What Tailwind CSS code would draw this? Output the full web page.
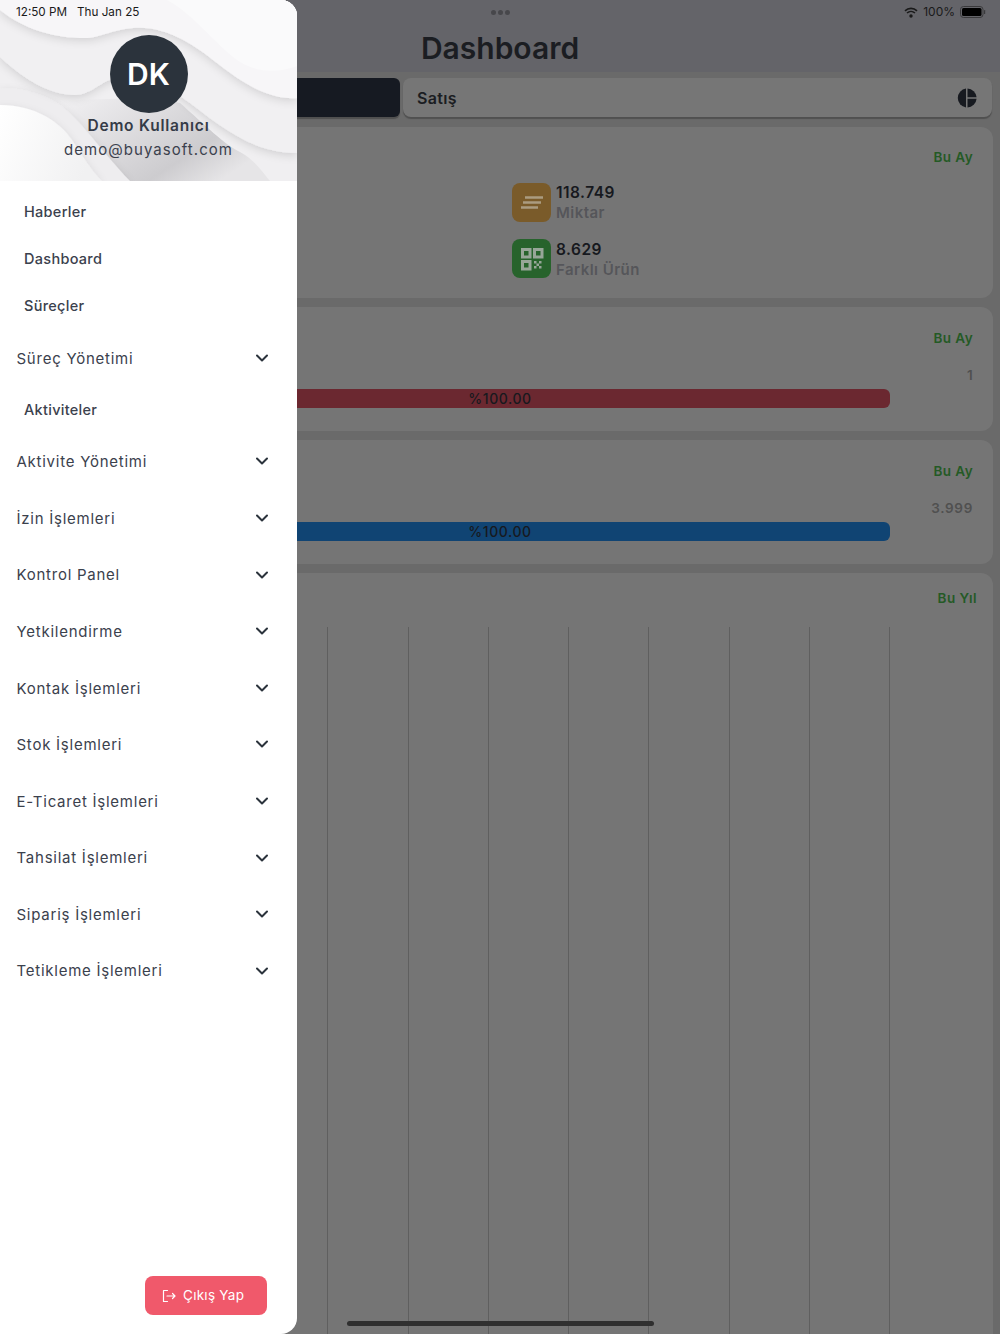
<!DOCTYPE html>
<html lang="en">
<head>
    <meta charset="UTF-8">
    <meta name="viewport" content="width=device-width, initial-scale=1.0">
    <script src="https://cdn.jsdelivr.net/npm/@tailwindcss/browser@4"></script>
    <title>Dashboard</title>
</head>
<body class="bg-[#6a6a6a] font-['Inter',sans-serif] h-[1334px] overflow-hidden relative">

    <!-- Dashboard behind the drawer -->
    <main class="h-[1334px] flex flex-col overflow-hidden">
        <header class="h-[72px] shrink-0 bg-[#646469] flex flex-col items-center">
            <div class="h-[24px] shrink-0 flex items-center gap-[2px]">
                <span class="w-[5px] h-[5px] rounded-full bg-[#47474b]"></span>
                <span class="w-[5px] h-[5px] rounded-full bg-[#47474b]"></span>
                <span class="w-[5px] h-[5px] rounded-full bg-[#47474b]"></span>
            </div>
            <h1 class="text-[30px] leading-[48px] font-semibold text-[#1b1d22]">Dashboard</h1>
        </header>

        <div class="flex gap-[3px] px-2 mt-[6px] h-[39px] shrink-0">
            <div class="w-[392px] bg-[#161a22] rounded-md shadow-[0_2px_1px_#505050]"></div>
            <div class="flex-1 bg-[#767676] rounded-lg shadow-[0_2px_1px_#505050] flex items-center justify-between pl-[14px] pr-[15px]">
                <span class="text-[16px] font-semibold text-[#1b1d22] tracking-[0.02em]">Satış</span>
                <svg width="20" height="20" viewBox="0 0 20 20" fill="#171a20">
                    <path d="M9 0.500A9.600 9.600 0 0 0 9 19.500Z"/>
                    <path d="M10.500 0.500A9.600 9.600 0 0 1 19.600 9.200H10.500Z"/>
                    <path d="M10.500 10.800H19.600A9.600 9.600 0 0 1 10.500 19.500Z"/>
                </svg>
            </div>
        </div>

        <section class="mt-[10px] mx-2 w-[985px] h-[171px] shrink-0 bg-[#757575] rounded-xl relative">
            <p class="absolute right-[20px] top-[22px] text-[13.500px] leading-[16px] font-semibold text-[#245a25] tracking-[0.03em]">Bu Ay</p>
            <div class="ml-[504px] pt-[56px] flex flex-col gap-[17px]">
                <div class="flex gap-[5px] h-[39px]">
                    <div class="w-[39px] h-[39px] rounded-lg bg-[#7a5b2a] flex items-center justify-center">
                        <svg width="22" height="13" viewBox="0 0 22 13" stroke="#ab9c80" stroke-width="2.500" fill="none">
                            <path d="M4 1.500H22M2 6.500H20M0 11.500H17"/>
                        </svg>
                    </div>
                    <div class="flex flex-col">
                        <span class="text-[15.500px] leading-[20px] font-semibold text-[#17191e] tracking-[0.03em]">118.749</span>
                        <span class="text-[15px] leading-[20px] font-semibold text-[#55565a] tracking-[0.03em]">Miktar</span>
                    </div>
                </div>
                <div class="flex gap-[5px] h-[39px]">
                    <div class="w-[39px] h-[39px] rounded-lg bg-[#27632c] flex items-center justify-center">
                        <svg width="24" height="24" viewBox="0 0 24 24" fill="none" stroke="#98a699" stroke-width="3">
                            <rect x="2.500" y="2.500" width="7.500" height="7.500"/>
                            <rect x="14.500" y="2.500" width="7.500" height="7.500"/>
                            <rect x="2.500" y="14.500" width="7.500" height="7.500"/>
                            <path d="M14 14h2.500v2.500h-2.500zM19 14h2.500v2.500h-2.500zM16.500 16.500h2.500v2.500h-2.500zM14 19h2.500v2.500h-2.500zM19 19h2.500v2.500h-2.500z" stroke="none" fill="#98a699"/>
                        </svg>
                    </div>
                    <div class="flex flex-col pt-[1px]">
                        <span class="text-[15.500px] leading-[20px] font-semibold text-[#17191e] tracking-[0.03em]">8.629</span>
                        <span class="text-[15px] leading-[20px] font-semibold text-[#55565a] tracking-[0.03em]">Farklı Ürün</span>
                    </div>
                </div>
            </div>
        </section>

        <section class="mt-[9px] mx-2 w-[985px] h-[124px] shrink-0 bg-[#757575] rounded-xl relative">
            <p class="absolute right-[20px] top-[23px] text-[13.500px] leading-[16px] font-semibold text-[#245a25] tracking-[0.03em]">Bu Ay</p>
            <p class="absolute right-[20px] top-[60px] text-[13.500px] leading-[16px] font-semibold text-[#505050] tracking-[0.03em]">1</p>
            <div class="absolute left-[102px] top-[82px] w-[780px] h-[19px] rounded-md bg-[#6b2830] flex items-center justify-center text-[14px] font-medium text-[#17191e] tracking-[0.04em]">%100.00</div>
        </section>

        <section class="mt-[9px] mx-2 w-[985px] h-[124px] shrink-0 bg-[#757575] rounded-xl relative">
            <p class="absolute right-[20px] top-[23px] text-[13.500px] leading-[16px] font-semibold text-[#245a25] tracking-[0.03em]">Bu Ay</p>
            <p class="absolute right-[20px] top-[60px] text-[13.500px] leading-[16px] font-semibold text-[#505050] tracking-[0.05em]">3.999</p>
            <div class="absolute left-[102px] top-[82px] w-[780px] h-[19px] rounded-md bg-[#104473] flex items-center justify-center text-[14px] font-medium text-[#17191e] tracking-[0.04em]">%100.00</div>
        </section>

        <section class="mt-[9px] mx-2 w-[985px] flex-1 bg-[#757575] rounded-t-xl relative">
            <p class="absolute right-[16px] top-[17px] text-[13.500px] leading-[16px] font-semibold text-[#245a25] tracking-[0.03em]">Bu Yıl</p>
            <div id="grid" class="absolute left-[78.500px] top-[54px] bottom-0 flex"></div>
        </section>
    </main>

    <div class="absolute left-[347px] bottom-[8px] w-[307px] h-[5px] rounded-full bg-[#2f2f2f]"></div>

    <!-- Drawer -->
    <aside class="absolute left-0 top-0 bottom-0 w-[297px] bg-white rounded-r-2xl overflow-hidden flex flex-col">
        <div class="relative h-[181px] shrink-0 flex flex-col items-center pt-[35px]">
            <svg class="absolute inset-0" width="297" height="181" viewBox="0 0 297 181">
                <defs>
                    <filter id="soft" x="-10%" y="-10%" width="120%" height="130%">
                        <feDropShadow dx="0" dy="3" stdDeviation="4" flood-color="#000" flood-opacity="0.12"/>
                    </filter>
                    <linearGradient id="low" x1="0" y1="0" x2="1" y2="0.600">
                        <stop offset="0" stop-color="#f2f1f3"/>
                        <stop offset="0.750" stop-color="#cdcccf"/>
                        <stop offset="1" stop-color="#e6e5e7"/>
                    </linearGradient>
                    <linearGradient id="corner" x1="0" y1="0" x2="1" y2="0.300">
                        <stop offset="0" stop-color="#ffffff"/>
                        <stop offset="1" stop-color="#f1f1f2"/>
                    </linearGradient>
                </defs>
                <rect width="297" height="181" fill="#f0eff1"/>
                <path d="M60 100C110 100 150 95 180 103C205 125 225 145 240 152C255 160 262 172 270 181H100Z" fill="url(#low)"/>
                <path d="M0 88C20 88 40 92 57 103C80 118 100 150 130 181H0Z" fill="#eeedef" filter="url(#soft)"/>
                <path d="M297 153C255 153 225 130 190 103C165 85 145 72 115 78C100 82 90 95 75 95C50 95 25 80 0 57V0H297Z" fill="#f1f0f2" filter="url(#soft)"/>
                <path d="M297 98C270 100 245 85 217 63C195 45 165 25 133 28C110 30 100 38 85 38C55 38 25 30 0 10V0H297Z" fill="#f7f6f8" filter="url(#soft)"/>
                <path d="M167 0C195 15 215 45 240 62C260 74 280 72 297 66V0Z" fill="#fafafb"/>
                <path d="M0 105C35 105 60 122 72 140C82 155 92 172 102 181H0Z" fill="url(#corner)" filter="url(#soft)"/>
            </svg>
            <div class="relative w-[78px] h-[78px] rounded-full bg-[#2b333c] flex items-center justify-center text-[30px] font-semibold text-white">DK</div>
            <p class="relative mt-[3px] text-[15.500px] leading-[20px] font-semibold text-[#353b47] tracking-[0.05em]">Demo Kullanıcı</p>
            <p class="relative mt-[4px] text-[15px] leading-[20px] text-[#3b414d] tracking-[0.07em]">demo@buyasoft.com</p>
        </div>

        <nav id="menu" class="pt-[7.500px]"></nav>

        <div class="mt-auto flex justify-end pr-[30px] pb-[19px]">
            <button class="w-[122px] h-[39px] rounded-lg bg-[#f0596b] flex items-center gap-[7px] pl-[17px] text-[13.500px] text-white tracking-[0.02em]">
                <svg width="14" height="14" viewBox="0 0 14 14" fill="none" stroke="white" stroke-width="1.200" stroke-linecap="round" stroke-linejoin="round">
                    <path d="M5.500 1.500H1.500V12.500H5.500M5 7H13M10.500 4.500L13 7L10.500 9.500"/>
                </svg>
                Çıkış Yap
            </button>
        </div>
    </aside>

    <!-- Status bar -->
    <div class="absolute left-[16px] top-[5px] h-[14px] flex gap-[10px] text-[11.700px] leading-[14px] text-[#1a1a1a]">
        <span>12:50 PM</span><span>Thu Jan 25</span>
    </div>
    <div class="absolute right-[14px] top-[5px] h-[14px] flex items-center gap-[5px] text-[12px] leading-[14px] text-[#1a1a1a]">
        <svg width="14" height="11" viewBox="0 0 14 11" fill="none" stroke="#1a1a1a" stroke-width="1.600">
            <path d="M1 3.800C4.400 0.600 9.600 0.600 13 3.800M3 6C5.300 3.900 8.700 3.900 11 6"/>
            <circle cx="7" cy="9" r="1.700" fill="#1a1a1a" stroke="none"/>
        </svg>
        <span>100%</span>
        <svg width="26" height="12" viewBox="0 0 26 12">
            <rect x="0.500" y="0.500" width="22.500" height="11" rx="3" fill="none" stroke="#3a3a3c"/>
            <rect x="2" y="2" width="19.500" height="8" rx="1.500" fill="#000"/>
            <rect x="24" y="4" width="1.200" height="4" rx="0.600" fill="#3a3a3c"/>
        </svg>
    </div>

    <script>
        const chevron = `<svg width="12" height="8" viewBox="0 0 12 8" fill="none" stroke="#2b333c" stroke-width="2" stroke-linecap="round" stroke-linejoin="round"><path d="M1 1.500L6 6.500L11 1.500"/></svg>`;

        // group: true rows have a chevron, the others are plain links
        const menuItems = [
            { name: 'Haberler' },
            { name: 'Dashboard' },
            { name: 'Süreçler' },
            { name: 'Süreç Yönetimi', group: true },
            { name: 'Aktiviteler' },
            { name: 'Aktivite Yönetimi', group: true },
            { name: 'İzin İşlemleri', group: true },
            { name: 'Kontrol Panel', group: true },
            { name: 'Yetkilendirme', group: true },
            { name: 'Kontak İşlemleri', group: true },
            { name: 'Stok İşlemleri', group: true },
            { name: 'E-Ticaret İşlemleri', group: true },
            { name: 'Tahsilat İşlemleri', group: true },
            { name: 'Sipariş İşlemleri', group: true },
            { name: 'Tetikleme İşlemleri', group: true }
        ];

        document.getElementById('menu').innerHTML = menuItems.map(item => item.group
            ? `<div class="h-[56.600px] flex items-center justify-between pl-[16.500px] pr-[29px] text-[15px] text-[#3b414d] tracking-[0.05em]"><span class="pt-[2px]">${item.name}</span>${chevron}</div>`
            : `<div class="h-[47px] flex items-center pl-[24px] text-[14.500px] font-medium text-[#3b414d] tracking-[0.02em]">${item.name}</div>`
        ).join('');

        document.getElementById('grid').innerHTML = Array.from({ length: 11 })
            .map(() => '<div class="w-[80.250px] h-full border-l border-[#5f5f5f]"></div>')
            .join('');
    </script>
</body>
</html>
